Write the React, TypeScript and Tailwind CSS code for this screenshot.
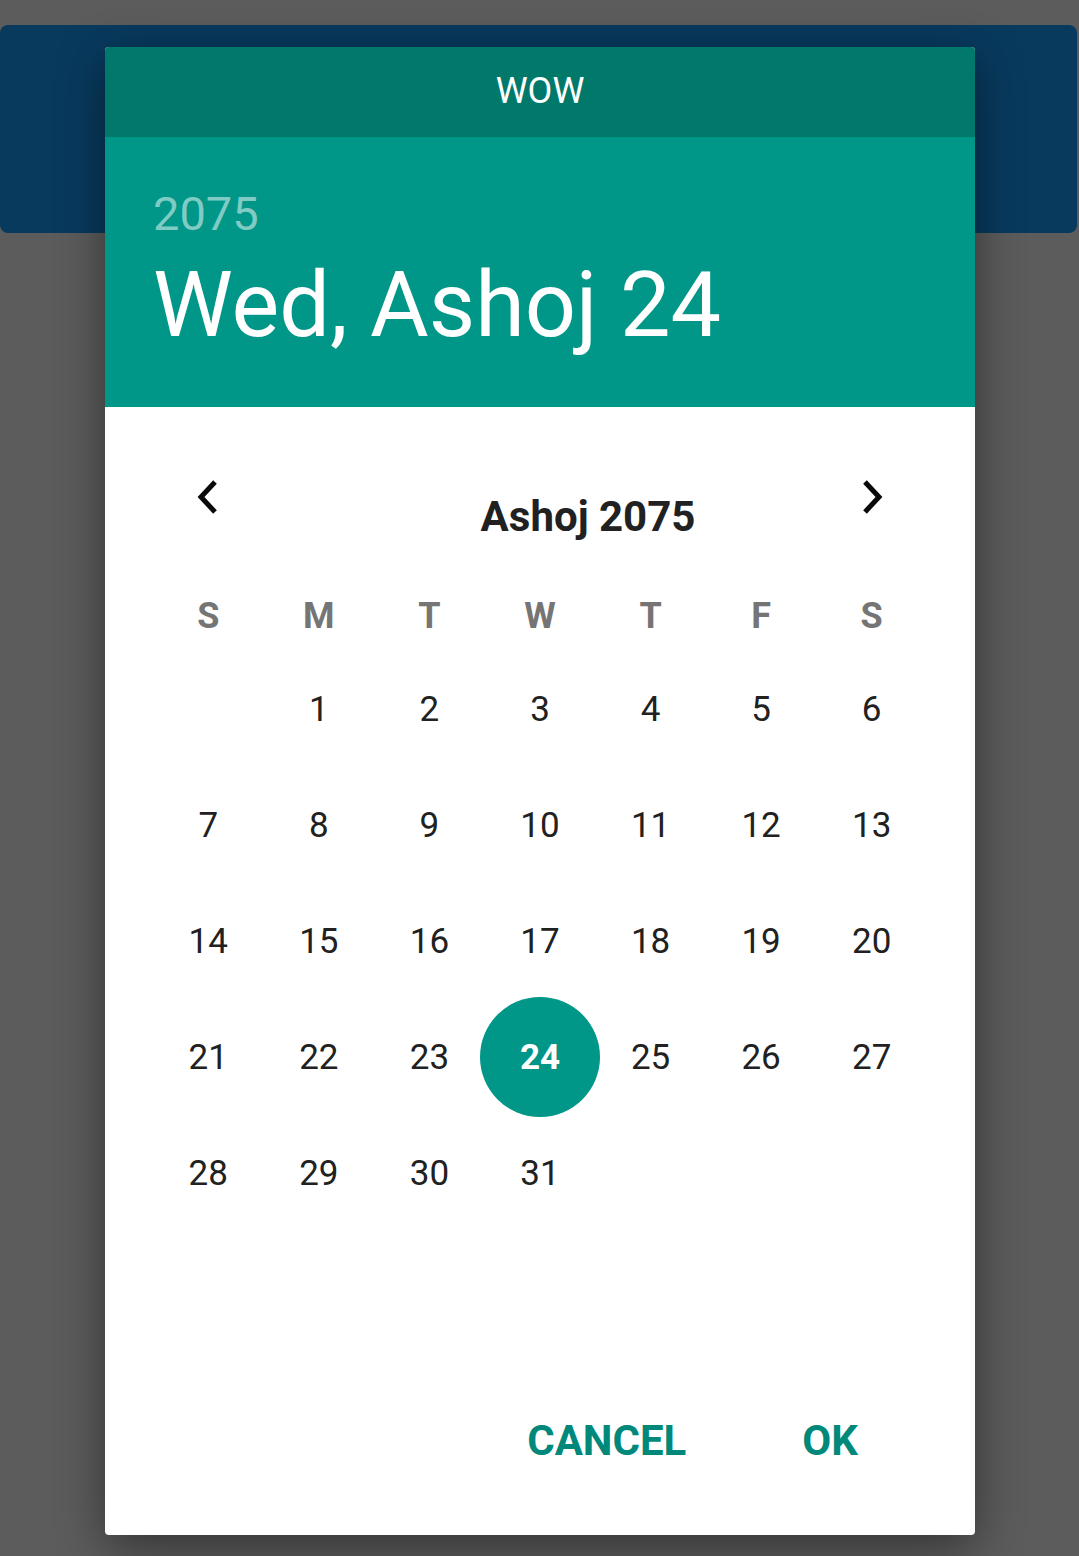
const weekdays = ["S", "M", "T", "W", "T", "F", "S"];

// Ashoj 2075 starts on a Monday, 31 days
const cells: (number | null)[] = [null, ...Array.from({ length: 31 }, (_, i) => i + 1)];
while (cells.length < 35) cells.push(null);

const selected = 24;

function Chevron({ dir }: { dir: "left" | "right" }) {
  return (
    <svg width="24" height="36" viewBox="0 0 24 36" fill="none">
      <polyline
        points={dir === "left" ? "19,3 5,18 19,33" : "5,3 19,18 5,33"}
        stroke="#0a0a0a"
        strokeWidth="5"
        strokeLinecap="butt"
        strokeLinejoin="miter"
      />
    </svg>
  );
}

export default function App() {
  return (
    <div
      className="relative w-[1079px] h-[1556px] bg-[#5c5c5c] overflow-hidden"
      style={{ fontFamily: "Roboto, 'Noto Sans', sans-serif" }}
    >
      {/* app bar behind the dialog */}
      <div className="absolute left-0 top-[25px] w-[1077px] h-[208px] rounded-[8px] bg-[#083a5e]" />

      {/* dialog */}
      <div className="absolute left-[105px] top-[47px] w-[870px] h-[1488px] rounded-[4px] bg-white flex flex-col overflow-hidden shadow-[0_12px_48px_rgba(0,0,0,0.45)]">
        <div className="h-[90px] bg-[#00796b] flex items-center justify-center text-white text-[36px] leading-none pb-[2px]">
          WOW
        </div>

        <div className="h-[270px] bg-[#009688] pl-[48px] pt-[53px]">
          <div className="text-[47px] leading-none text-[#80cbc4]">2075</div>
          <div className="mt-[24px] text-[90px] leading-none text-white">Wed, Ashoj 24</div>
        </div>

        <div className="px-[48px] pt-[72px]">
          <div className="flex items-start h-[66px]">
            <div className="w-[110px] flex justify-center">
              <Chevron dir="left" />
            </div>
            <div className="flex-1 pl-[96px] pt-[17px] text-center text-[42px] leading-none font-bold text-[#212121]">
              Ashoj 2075
            </div>
            <div className="w-[110px] flex justify-center">
              <Chevron dir="right" />
            </div>
          </div>

          <div className="mt-[46px] grid grid-cols-7 h-[50px]">
            {weekdays.map((d, i) => (
              <div key={i} className="flex items-center justify-center text-[36px] leading-none font-bold text-[#757575]">
                {d}
              </div>
            ))}
          </div>

          <div className="mt-[10px] grid grid-cols-7 auto-rows-[116px]">
            {cells.map((day, i) => (
              <div key={i} className="flex items-center justify-center">
                {day === selected ? (
                  <div className="w-[120px] h-[120px] shrink-0 rounded-full bg-[#009688] flex items-center justify-center text-white text-[35px] leading-none font-bold">
                    {day}
                  </div>
                ) : day ? (
                  <span className="text-[35px] leading-none text-[#212121]">{day}</span>
                ) : null}
              </div>
            ))}
          </div>
        </div>

        <div className="mt-auto pb-[70px] pr-[117px] flex justify-end gap-[116px] text-[42px] leading-[48px] font-bold text-[#00897b]">
          <span>CANCEL</span>
          <span>OK</span>
        </div>
      </div>
    </div>
  );
}
